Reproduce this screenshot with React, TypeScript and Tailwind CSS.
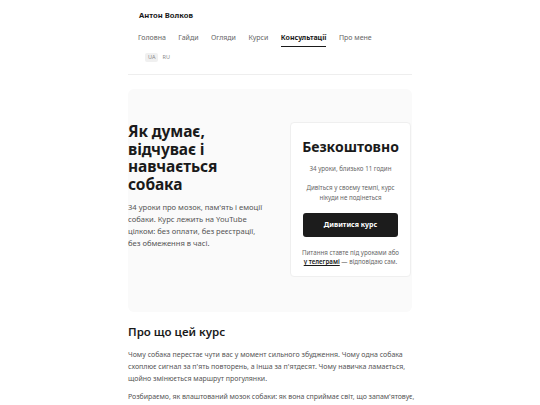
import React from "react";

const navItems = ["Головна", "Гайди", "Огляди", "Курси", "Консультації", "Про мене"];

export default function App() {
  return (
    <div className="min-h-screen bg-white font-['Noto_Sans',sans-serif] text-[#1a1a1a]">
      <div className="mx-auto w-[284px]">
        <header className="pl-[10px] pt-[10px]">
          <div className="pl-px text-[7.6px] font-bold leading-[11px]">Антон Волков</div>
          <nav className="mt-[12px] flex gap-[12.5px] text-[7px] leading-[10px] text-[#666]">
            {navItems.map((item) => (
              <span
                key={item}
                className={
                  item === "Консультації"
                    ? "border-b-[1.5px] border-[#1a1a1a] pb-[3px] font-bold text-[#1a1a1a]"
                    : "border-b-[1.5px] border-transparent pb-[3px]"
                }
              >
                {item}
              </span>
            ))}
          </nav>
          <div className="ml-[7px] mt-[6px] flex items-center gap-[2px] text-[5.5px] leading-[9px] text-[#888]">
            <span className="rounded-[2px] bg-[#f0f0f0] px-[3px]">UA</span>
            <span className="px-[2px]">RU</span>
          </div>
        </header>
        <div className="mt-[12px] h-px bg-[#eeeeee]" />

        <section className="mt-[14px] flex items-start rounded-[6px] bg-[#fafafa] pb-[35px] pr-px pt-[33px]">
          <div className="w-[150px] pt-px">
            <h1 className="text-[15.5px] font-bold leading-[17.5px] tracking-[-0.1px]">
              Як думає,
              <br />
              відчуває і
              <br />
              навчається
              <br />
              собака
            </h1>
            <p className="mt-[8px] w-[140px] text-[7.6px] leading-[12px] text-[#555]">
              34 уроки про мозок, пам'ять і емоції собаки. Курс лежить на YouTube цілком: без оплати, без реєстрації, без обмеження в часі.
            </p>
          </div>
          <div className="ml-auto w-[121px] rounded-[4px] border border-[#efefef] bg-white px-[6px] pb-[10px] pt-[15px] text-center">
            <div className="text-[14px] font-bold leading-[18px]">Безкоштовно</div>
            <div className="mt-[8px] text-[6.2px] leading-[9px] text-[#666]">34 уроки, близько 11 годин</div>
            <div className="mt-[10px] text-[6.2px] leading-[10px] text-[#666]">
              Дивіться у своєму темпі, курс
              <br />
              нікуди не подінеться
            </div>
            <div className="px-[6px]">
              <button className="mt-[10px] h-[24px] w-full rounded-[3px] bg-[#1c1c1c] text-[7px] font-bold text-white">
                Дивитися курс
              </button>
            </div>
            <div className="mt-[11px] whitespace-nowrap text-[6.2px] leading-[9px] text-[#666]">
              Питання ставте під уроками або
              <br />
              <span className="font-semibold text-[#1a1a1a] underline">у телеграмі</span> — відповідаю сам.
            </div>
          </div>
        </section>

        <section className="mt-[12px]">
          <h2 className="text-[11.5px] font-semibold leading-[15px]">Про що цей курс</h2>
          <p className="mt-[10px] text-[7px] leading-[12px] text-[#555]">
            Чому собака перестає чути вас у момент сильного збудження. Чому одна собака схоплює сигнал за п'ять повторень, а інша за п'ятдесят. Чому навичка ламається, щойно змінюється маршрут прогулянки.
          </p>
          <p className="mt-[6px] text-[7px] leading-[12px] text-[#555]">
            <span className="whitespace-nowrap tracking-[-0.05px]">
              Розбираємо, як влаштований мозок собаки: як вона сприймає світ, що запам'ятовує,
            </span>{" "}
            чому реагує саме так і як це використовувати в щоденному житті разом.
          </p>
        </section>
      </div>
    </div>
  );
}
